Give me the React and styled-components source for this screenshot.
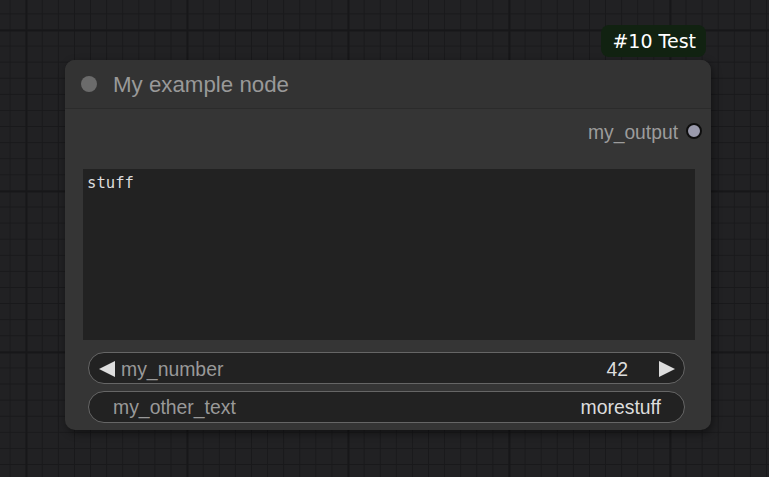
import React from 'react';
import styled, { createGlobalStyle } from 'styled-components';

const GlobalStyle = createGlobalStyle`
  html, body {
    margin: 0;
    padding: 0;
    background: #202022;
  }
`;

const Canvas = styled.div`
  position: relative;
  width: 769px;
  height: 477px;
  overflow: hidden;
  background-color: #212123;
  background-image:
    linear-gradient(to right, #171719 2px, transparent 2px),
    linear-gradient(to bottom, #171719 2px, transparent 2px),
    linear-gradient(to right, #19191b 1px, transparent 1px),
    linear-gradient(to bottom, #19191b 1px, transparent 1px);
  background-size: 161px 161px, 161px 161px, 16.1px 16.1px, 16.1px 16.1px;
  background-position: 25.5px 29.5px, 25.5px 29.5px, 9.6px 13.4px, 9.6px 13.4px;
  font-family: 'Liberation Sans', Arial, sans-serif;
`;

const Node = styled.div`
  position: absolute;
  left: ${props => props.x}px;
  top: ${props => props.y}px;
  width: 646px;
  display: flex;
  flex-direction: column;
  background: #353535;
  border-radius: 10px;
  box-shadow: 2px 3px 8px rgba(0, 0, 0, 0.45);
  padding-bottom: 7px;
`;

const Badge = styled.div`
  position: absolute;
  top: -35px;
  right: 5px;
  height: 32px;
  padding: 0 10px 0 11px;
  display: flex;
  align-items: center;
  background: #112211;
  border-radius: 8px;
  color: #ffffff;
  font-family: 'DejaVu Sans', sans-serif;
  font-size: 19px;
`;

const TitleBar = styled.div`
  height: 48px;
  display: flex;
  align-items: center;
  padding-left: 16px;
  background: #333333;
  border-radius: 10px 10px 0 0;
  border-bottom: 1px solid #2b2b2b;
`;

const TitleDot = styled.span`
  width: 16px;
  height: 16px;
  border-radius: 50%;
  background: #6b6b6b;
  margin-right: 16px;
  flex-shrink: 0;
`;

const TitleText = styled.span`
  color: #999999;
  font-size: 22.3px;
  line-height: 1;
  padding-top: 3px;
`;

const OutputRow = styled.div`
  height: 46px;
  display: flex;
  align-items: center;
  justify-content: flex-end;
  padding-right: 9px;
`;

const OutputLabel = styled.span`
  color: #9c9c9c;
  font-size: 19.3px;
  margin-right: 8px;
  padding-top: 2px;
`;

const Slot = styled.span`
  width: 12px;
  height: 12px;
  border-radius: 50%;
  background: #9a9aac;
  border: 2px solid #0e0e0e;
  margin-bottom: 2px;
`;

const TextArea = styled.div`
  margin: 14px 0 0 18px;
  width: 612px;
  height: 171px;
  box-sizing: border-box;
  background: #222222;
  color: #dddddd;
  font-family: 'DejaVu Sans Mono', monospace;
  font-size: 15.6px;
  padding: 5px 4px;
`;

const Widgets = styled.div`
  margin: 12px 0 0 23px;
  width: 597px;
  display: flex;
  flex-direction: column;
  gap: 7px;
`;

const Widget = styled.div`
  height: 32px;
  box-sizing: border-box;
  display: flex;
  align-items: center;
  background: #222222;
  border: 1px solid #666666;
  border-radius: 16px;
  padding: ${props => (props.arrows ? '2px 9px 0 10px' : '1px 23px 0 24px')};
  font-size: 19.4px;
`;

const Arrow = styled.span`
  width: 0;
  height: 0;
  border-top: 8px solid transparent;
  border-bottom: 8px solid transparent;
  margin-bottom: 1px;
  ${props =>
    props.dir === 'left'
      ? 'border-right: 16px solid #dddddd; margin-right: 6px;'
      : 'border-left: 16px solid #dddddd; margin-left: 31px;'}
`;

const Label = styled.span`
  color: #999999;
  flex: 1;
`;

const Value = styled.span`
  color: #dddddd;
`;

export default function App() {
  return (
    <Canvas>
      <GlobalStyle />
      <Node x={65} y={60}>
        <Badge>#10 Test</Badge>
        <TitleBar>
          <TitleDot />
          <TitleText>My example node</TitleText>
        </TitleBar>
        <OutputRow>
          <OutputLabel>my_output</OutputLabel>
          <Slot />
        </OutputRow>
        <TextArea>stuff</TextArea>
        <Widgets>
          <Widget arrows>
            <Arrow dir="left" />
            <Label>my_number</Label>
            <Value>42</Value>
            <Arrow dir="right" />
          </Widget>
          <Widget>
            <Label>my_other_text</Label>
            <Value>morestuff</Value>
          </Widget>
        </Widgets>
      </Node>
    </Canvas>
  );
}
